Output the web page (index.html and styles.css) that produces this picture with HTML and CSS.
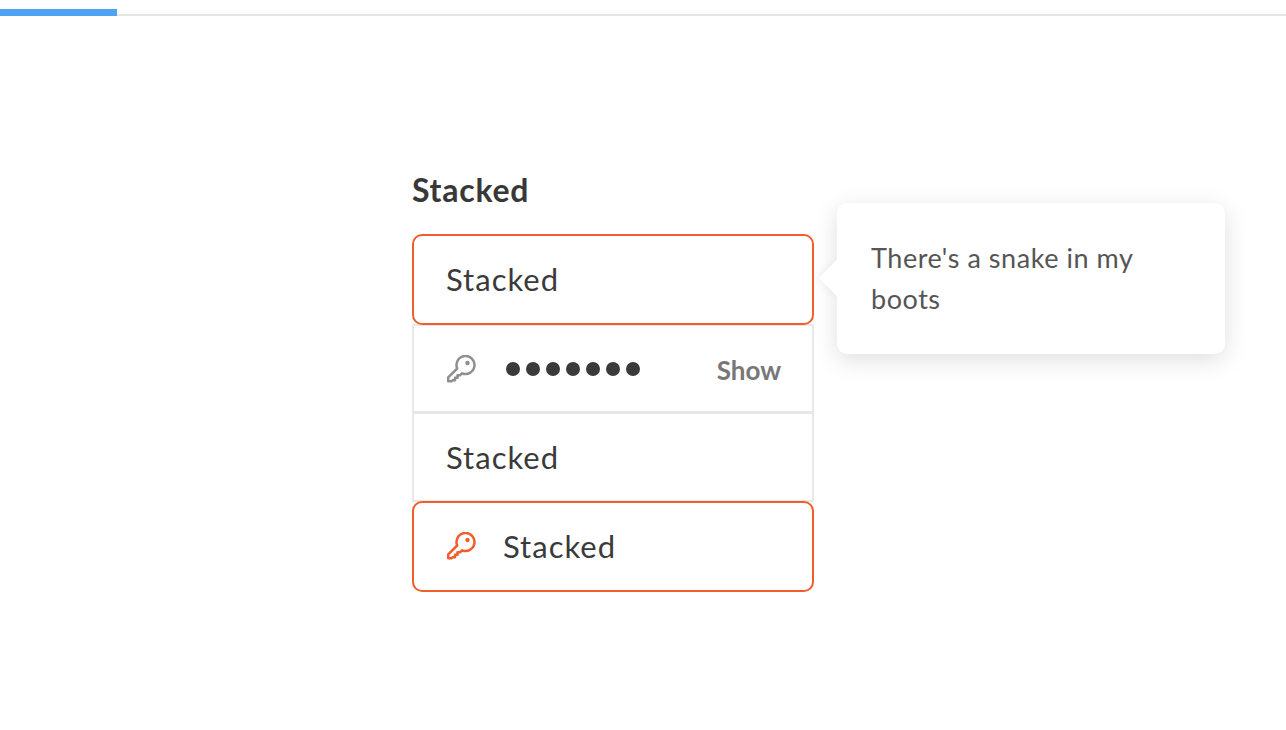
FILE: index.html
```html
<!DOCTYPE html>
<html lang="en">
<head>
    <meta charset="UTF-8">
    <meta name="viewport" content="width=device-width, initial-scale=1.0">
    <title>Stacked</title>
    <link rel="stylesheet" href="styles.css">
</head>
<body>
    <div class="progress">
        <div class="progress-bar"></div>
    </div>

    <div class="section">
        <h2 class="title">Stacked</h2>

        <div class="stack">
            <div class="field focused tall">
                <span class="value">Stacked</span>
            </div>
            <div class="field short">
                <svg class="key" xmlns="http://www.w3.org/2000/svg" viewBox="0 0 29 28" fill="none" stroke="currentColor" stroke-width="2.5" stroke-linejoin="round">
                    <path d="M10.2 13.5A9 9 0 1 1 15 18.3L13 20.3h-2.5v2.5H8v2.5H5.5l-1 1H1.2v-4z"/>
                    <circle cx="20.5" cy="8" r="2.2" fill="currentColor" stroke="none"/>
                </svg>
                <div class="dots">
                    <span></span><span></span><span></span><span></span><span></span><span></span><span></span>
                </div>
                <a class="show" href="#">Show</a>
            </div>
            <div class="field">
                <span class="value">Stacked</span>
            </div>
            <div class="field focused tall">
                <svg class="key" xmlns="http://www.w3.org/2000/svg" viewBox="0 0 29 28" fill="none" stroke="currentColor" stroke-width="2.5" stroke-linejoin="round">
                    <path d="M10.2 13.5A9 9 0 1 1 15 18.3L13 20.3h-2.5v2.5H8v2.5H5.5l-1 1H1.2v-4z"/>
                    <circle cx="20.5" cy="8" r="2.2" fill="currentColor" stroke="none"/>
                </svg>
                <span class="value">Stacked</span>
            </div>

            <div class="tooltip">
                <p>There's a snake in my boots</p>
            </div>
        </div>
    </div>
</body>
</html>
```

FILE: styles.css
```css
body {
    margin: 0;
    font-family: Lato, "Open Sans", sans-serif;
    background-color: #fff;
    color: #3a3a3a;
}

.progress {
    height: 7px;
    margin-top: 9px;
    border-bottom: 2px solid #e6e6e6;
    box-sizing: border-box;
}

.progress-bar {
    width: 117px;
    height: 7px;
    background-color: #4fa3f2;
}

.section {
    width: 402px;
    margin: 155px 0 0 412px;
}

.title {
    margin: 0 0 25px;
    font-size: 32px;
    line-height: 38px;
    font-weight: 700;
    letter-spacing: 0.75px;
    color: #383838;
}

.stack {
    position: relative;
    display: flex;
    flex-direction: column;
}

.field {
    position: relative;
    display: flex;
    align-items: center;
    height: 90px;
    box-sizing: border-box;
    padding: 0 31px 0 32px;
    margin-top: -1px;
    border: 2px solid #e8e8e8;
    background-color: #fff;
}

.field:first-child {
    margin-top: 0;
}

.field.tall {
    height: 91px;
    padding-bottom: 1px;
}

.field.short {
    height: 89px;
}

.field.focused {
    z-index: 1;
    border-color: #f15d2b;
    border-radius: 10px;
}

.value {
    font-size: 31px;
    letter-spacing: 1px;
    color: #3a3a3a;
}

.key {
    width: 29px;
    height: 28px;
    flex-shrink: 0;
    margin: 0 27px 0 1px;
    color: #8f8f8f;
}

.focused .key {
    color: #f15d2b;
}

.dots {
    display: flex;
    gap: 6px;
    margin-left: 3px;
}

.dots span {
    width: 14px;
    height: 14px;
    border-radius: 50%;
    background-color: #3a3a3a;
}

.show {
    margin: 3px 0 0 auto;
    font-size: 26px;
    font-weight: 700;
    color: #777;
    text-decoration: none;
}

.tooltip {
    position: absolute;
    top: -31px;
    left: 425px;
    z-index: 2;
    width: 388px;
    height: 151px;
    box-sizing: border-box;
    padding: 34px;
    background-color: #fff;
    border-radius: 10px;
    box-shadow: 0 6px 24px rgba(0, 0, 0, 0.13);
}

.tooltip::before {
    content: "";
    position: absolute;
    top: 62px;
    left: -13px;
    width: 26px;
    height: 26px;
    background-color: #fff;
    transform: rotate(45deg);
    box-shadow: -3px 3px 6px rgba(0, 0, 0, 0.04);
}

.tooltip p {
    position: relative;
    margin: 0;
    font-size: 27px;
    line-height: 41px;
    letter-spacing: 0.55px;
    color: #555;
}
```
